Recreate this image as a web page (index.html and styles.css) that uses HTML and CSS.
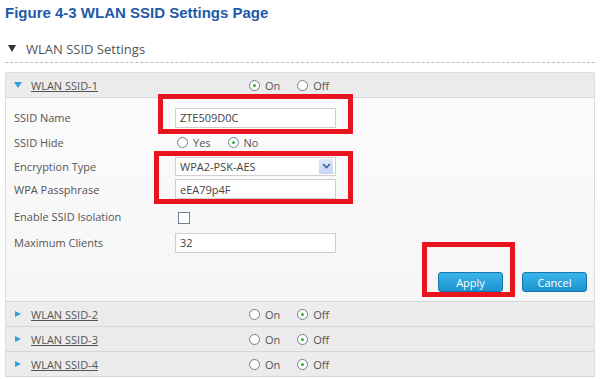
FILE: index.html
```html
<!DOCTYPE html>
<html>
<head>
<meta charset="utf-8">
<link rel="stylesheet" href="styles.css">
</head>
<body>
<div class="page">
  <h1 class="fig-title">Figure 4-3 WLAN SSID Settings Page</h1>
  <div class="section-head"><span class="tri-down-dark"></span><span>WLAN SSID Settings</span></div>
  <div class="panel">
    <div class="ssid-row open">
      <span class="tri-down"></span><a class="ssid-link">WLAN SSID-1</a>
      <div class="radios"><span class="radio checked"></span><span class="rlabel">On</span><span class="radio"></span><span class="rlabel">Off</span></div>
    </div>
    <div class="ssid-body">
      <div class="form">
        <div class="label">SSID Name</div><div class="field"><div class="input">ZTE509D0C</div></div>
        <div class="label">SSID Hide</div><div class="field"><span class="radio"></span><span class="rlabel">Yes</span><span class="radio checked"></span><span class="rlabel">No</span></div>
        <div class="label">Encryption Type</div><div class="field"><div class="input select">WPA2-PSK-AES<span class="sel-arrow"><svg width="9" height="6" viewBox="0 0 9 6"><path d="M1 1 L4.5 4.5 L8 1" fill="none" stroke="#3a5f99" stroke-width="1.6"/></svg></span></div></div>
        <div class="label">WPA Passphrase</div><div class="field"><div class="input">eEA79p4F</div></div>
        <div class="label">Enable SSID Isolation</div><div class="field"><span class="checkbox"></span></div>
        <div class="label">Maximum Clients</div><div class="field"><div class="input">32</div></div>
      </div>
      <div class="buttons"><button class="btn">Apply</button><button class="btn">Cancel</button></div>
    </div>
    <div class="ssid-row">
      <span class="tri-right"></span><a class="ssid-link">WLAN SSID-2</a>
      <div class="radios"><span class="radio"></span><span class="rlabel">On</span><span class="radio checked"></span><span class="rlabel">Off</span></div>
    </div>
    <div class="ssid-row">
      <span class="tri-right"></span><a class="ssid-link">WLAN SSID-3</a>
      <div class="radios"><span class="radio"></span><span class="rlabel">On</span><span class="radio checked"></span><span class="rlabel">Off</span></div>
    </div>
    <div class="ssid-row last">
      <span class="tri-right"></span><a class="ssid-link">WLAN SSID-4</a>
      <div class="radios"><span class="radio"></span><span class="rlabel">On</span><span class="radio checked"></span><span class="rlabel">Off</span></div>
    </div>
    <div class="mark mark-name"></div>
    <div class="mark mark-enc"></div>
    <div class="mark mark-apply"></div>
  </div>
</div>
</body>
</html>
```
FILE: styles.css
```css
html, body { margin: 0; padding: 0; background: #fff; }
.page { width: 600px; height: 379px; overflow: hidden; padding: 0 5px; box-sizing: border-box; font-family: "Open Sans", "DejaVu Sans", sans-serif; color: #555; }
.fig-title { margin: 0; padding-top: 4px; font-family: "Liberation Sans", Arial, sans-serif; font-weight: bold; font-size: 15px; line-height: 18px; color: #1d5aa8; }
.section-head { display: flex; align-items: center; margin-top: 17px; height: 19px; padding: 0 0 4px 3px; font-size: 13px; color: #555; border-bottom: 1px dashed #bdbdbd; }
.tri-down-dark { width: 0; height: 0; border-left: 4px solid transparent; border-right: 4px solid transparent; border-top: 7px solid #333; margin-right: 10px; }
.panel { position: relative; margin-top: 9px; border: 1px solid #dcdcdc; border-bottom: none; }
.ssid-row { display: flex; align-items: center; height: 24px; background: #ececec; border-bottom: 1px solid #d6d6d6; padding-left: 8px; font-size: 11px; }
.tri-down { width: 0; height: 0; border-left: 4px solid transparent; border-right: 4px solid transparent; border-top: 6px solid #2e9fd8; margin-right: 9px; }
.tri-right { width: 0; height: 0; border-top: 3.5px solid transparent; border-bottom: 3.5px solid transparent; border-left: 6px solid #2e9fd8; margin-right: 10px; margin-left: 1px; }
.ssid-link { color: #555; text-decoration: underline; width: 218px; }
.radios { display: flex; align-items: center; }
.radio { display: inline-block; border: 1px solid #6e7f91; border-radius: 50%; background: #fff; position: relative; box-sizing: border-box; width: 11px; height: 11px; margin-right: 5px; }
.radio.checked::after { content: ""; position: absolute; left: 3px; top: 3px; width: 3px; height: 3px; border-radius: 50%; background: #3fae3f; }
.rlabel { margin-right: 17px; font-size: 11px; color: #555; }
.field .radio:first-child { margin-left: 2px; }
.ssid-body { background: linear-gradient(#fbfbfb, #f6f6f6); border-bottom: 1px solid #d6d6d6; padding: 7px 0 9px 8px; }
.form { display: grid; grid-template-columns: 161px 162px; grid-template-rows: 25px 25px 22px 24px 31px 21px; font-size: 11px; }
.label { display: flex; align-items: center; color: #555; }
.field { display: flex; align-items: center; }
.input { position: relative; box-sizing: border-box; width: 161px; height: 20px; border: 1px solid #cfcfcf; background: #fff; font-size: 11px; color: #444; padding-left: 4px; display: flex; align-items: center; }
.input.select { height: 19px; }
.sel-arrow { position: absolute; right: 2px; top: 1px; width: 14px; height: 15px; background: linear-gradient(#dfe8fb, #c5d5f3); display: flex; align-items: center; justify-content: center; }
.checkbox { display: inline-block; width: 10px; height: 10px; border: 1px solid #6e7f91; background: #fff; margin-left: 3px; margin-top: 2px; }
.buttons { display: flex; justify-content: flex-end; gap: 19px; margin-top: 19px; padding-right: 7px; }
.btn { width: 65px; height: 20px; border: 1px solid #1676ad; border-radius: 3px; background: linear-gradient(#3ab6ea, #1d93d0); color: #fff; font-family: "Open Sans", sans-serif; font-size: 11px; padding: 0; }
.mark { position: absolute; border: 5px solid #e8151f; box-sizing: border-box; }
.mark-name { left: 152px; top: 21px; width: 195px; height: 40px; }
.mark-enc { left: 148px; top: 78px; width: 199px; height: 53px; }
.mark-apply { left: 416px; top: 169px; width: 93px; height: 55px; }
```
